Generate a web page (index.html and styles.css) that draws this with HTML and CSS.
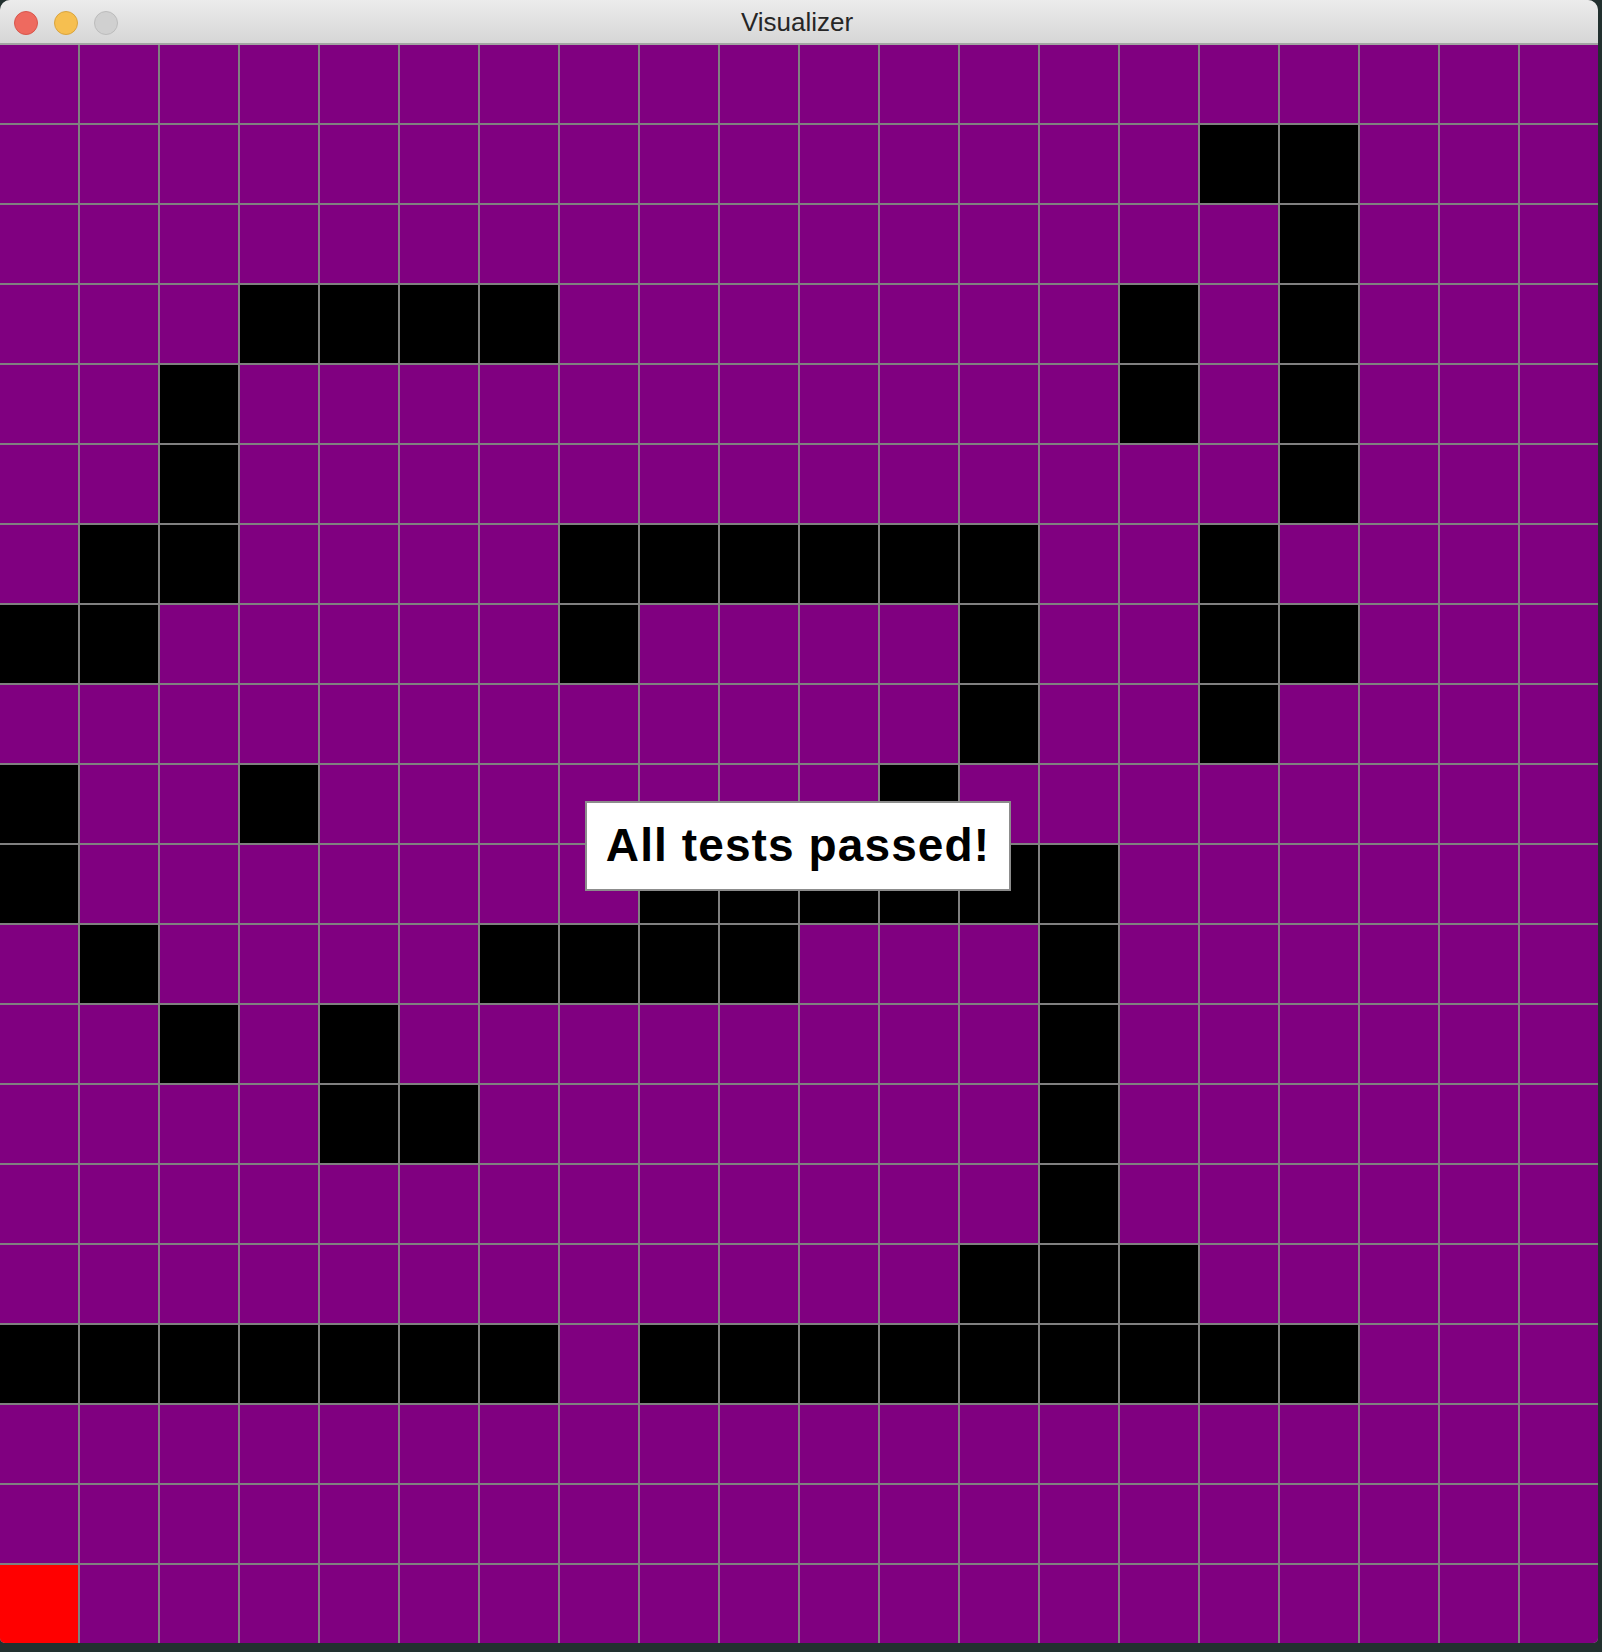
FILE: index.html
```html
<!DOCTYPE html>
<html>
<head>
<meta charset="utf-8">
<title>Visualizer</title>
<link rel="stylesheet" href="styles.css">
</head>
<body>
<div class="window">
  <div class="titlebar">
    <div class="lights">
      <span class="light red"></span>
      <span class="light yellow"></span>
      <span class="light grey"></span>
    </div>
    <div class="title">Visualizer</div>
  </div>
  <div class="board">
    <div class="grid">
      <i></i><i></i><i></i><i></i><i></i><i></i><i></i><i></i><i></i><i></i><i></i><i></i><i></i><i></i><i></i><i></i><i></i><i></i><i></i><i></i>
      <i></i><i></i><i></i><i></i><i></i><i></i><i></i><i></i><i></i><i></i><i></i><i></i><i></i><i></i><i></i><i class="w"></i><i class="w"></i><i></i><i></i><i></i>
      <i></i><i></i><i></i><i></i><i></i><i></i><i></i><i></i><i></i><i></i><i></i><i></i><i></i><i></i><i></i><i></i><i class="w"></i><i></i><i></i><i></i>
      <i></i><i></i><i></i><i class="w"></i><i class="w"></i><i class="w"></i><i class="w"></i><i></i><i></i><i></i><i></i><i></i><i></i><i></i><i class="w"></i><i></i><i class="w"></i><i></i><i></i><i></i>
      <i></i><i></i><i class="w"></i><i></i><i></i><i></i><i></i><i></i><i></i><i></i><i></i><i></i><i></i><i></i><i class="w"></i><i></i><i class="w"></i><i></i><i></i><i></i>
      <i></i><i></i><i class="w"></i><i></i><i></i><i></i><i></i><i></i><i></i><i></i><i></i><i></i><i></i><i></i><i></i><i></i><i class="w"></i><i></i><i></i><i></i>
      <i></i><i class="w"></i><i class="w"></i><i></i><i></i><i></i><i></i><i class="w"></i><i class="w"></i><i class="w"></i><i class="w"></i><i class="w"></i><i class="w"></i><i></i><i></i><i class="w"></i><i></i><i></i><i></i><i></i>
      <i class="w"></i><i class="w"></i><i></i><i></i><i></i><i></i><i></i><i class="w"></i><i></i><i></i><i></i><i></i><i class="w"></i><i></i><i></i><i class="w"></i><i class="w"></i><i></i><i></i><i></i>
      <i></i><i></i><i></i><i></i><i></i><i></i><i></i><i></i><i></i><i></i><i></i><i></i><i class="w"></i><i></i><i></i><i class="w"></i><i></i><i></i><i></i><i></i>
      <i class="w"></i><i></i><i></i><i class="w"></i><i></i><i></i><i></i><i></i><i></i><i></i><i></i><i class="w"></i><i></i><i></i><i></i><i></i><i></i><i></i><i></i><i></i>
      <i class="w"></i><i></i><i></i><i></i><i></i><i></i><i></i><i></i><i class="w"></i><i class="w"></i><i class="w"></i><i class="w"></i><i class="w"></i><i class="w"></i><i></i><i></i><i></i><i></i><i></i><i></i>
      <i></i><i class="w"></i><i></i><i></i><i></i><i></i><i class="w"></i><i class="w"></i><i class="w"></i><i class="w"></i><i></i><i></i><i></i><i class="w"></i><i></i><i></i><i></i><i></i><i></i><i></i>
      <i></i><i></i><i class="w"></i><i></i><i class="w"></i><i></i><i></i><i></i><i></i><i></i><i></i><i></i><i></i><i class="w"></i><i></i><i></i><i></i><i></i><i></i><i></i>
      <i></i><i></i><i></i><i></i><i class="w"></i><i class="w"></i><i></i><i></i><i></i><i></i><i></i><i></i><i></i><i class="w"></i><i></i><i></i><i></i><i></i><i></i><i></i>
      <i></i><i></i><i></i><i></i><i></i><i></i><i></i><i></i><i></i><i></i><i></i><i></i><i></i><i class="w"></i><i></i><i></i><i></i><i></i><i></i><i></i>
      <i></i><i></i><i></i><i></i><i></i><i></i><i></i><i></i><i></i><i></i><i></i><i></i><i class="w"></i><i class="w"></i><i class="w"></i><i></i><i></i><i></i><i></i><i></i>
      <i class="w"></i><i class="w"></i><i class="w"></i><i class="w"></i><i class="w"></i><i class="w"></i><i class="w"></i><i></i><i class="w"></i><i class="w"></i><i class="w"></i><i class="w"></i><i class="w"></i><i class="w"></i><i class="w"></i><i class="w"></i><i class="w"></i><i></i><i></i><i></i>
      <i></i><i></i><i></i><i></i><i></i><i></i><i></i><i></i><i></i><i></i><i></i><i></i><i></i><i></i><i></i><i></i><i></i><i></i><i></i><i></i>
      <i></i><i></i><i></i><i></i><i></i><i></i><i></i><i></i><i></i><i></i><i></i><i></i><i></i><i></i><i></i><i></i><i></i><i></i><i></i><i></i>
      <i class="r"></i><i></i><i></i><i></i><i></i><i></i><i></i><i></i><i></i><i></i><i></i><i></i><i></i><i></i><i></i><i></i><i></i><i></i><i></i><i></i>
    </div>
    <div class="toast">All tests passed!</div>
  </div>
</div>
</body>
</html>
```

FILE: styles.css
```css
html, body {
  margin: 0;
  padding: 0;
}

body {
  background: #22302f;
  width: 1602px;
  height: 1652px;
  overflow: hidden;
}

.window {
  width: 1598px;
  border-radius: 10px 10px 5px 5px;
  overflow: hidden;
  background: #808080;
}

.titlebar {
  display: grid;
  height: 43px;
  border-bottom: 2px solid #a3a3a3;
  background: linear-gradient(#ececec, #d6d6d6);
}

.lights,
.title {
  grid-area: 1 / 1;
}

.lights {
  display: flex;
  align-items: center;
  gap: 16px;
  padding-left: 14px;
  padding-top: 1px;
}

.light {
  width: 22px;
  height: 22px;
  border-radius: 50%;
  border: 1px solid;
}

.red {
  background: #ee6a5f;
  border-color: #d8564c;
}

.yellow {
  background: #f6bf50;
  border-color: #d9a43f;
}

.grey {
  background: #d0d0d0;
  border-color: #bcbcbc;
}

.title {
  text-align: center;
  font-family: "Liberation Sans", Arial, sans-serif;
  font-size: 26px;
  line-height: 43px;
  color: #262626;
  padding-right: 4px;
  padding-top: 1px;
}

.board {
  position: relative;
}

.grid {
  display: grid;
  grid-template-columns: repeat(20, 78px);
  grid-auto-rows: 78px;
  gap: 2px;
  background: #808080;
}

.grid i {
  background: #800080;
}

.grid i.w {
  background: #000000;
}

.grid i.r {
  background: #ff0000;
}

.toast {
  position: absolute;
  left: 585px;
  top: 756px;
  width: 422px;
  height: 84px;
  border: 2px solid #8c8c8c;
  background: #ffffff;
  display: flex;
  align-items: center;
  justify-content: center;
  font-family: "Liberation Sans", Arial, sans-serif;
  font-weight: bold;
  font-size: 46px;
  letter-spacing: 1.1px;
  color: #000000;
  padding-bottom: 2px;
  box-sizing: content-box;
}
```
